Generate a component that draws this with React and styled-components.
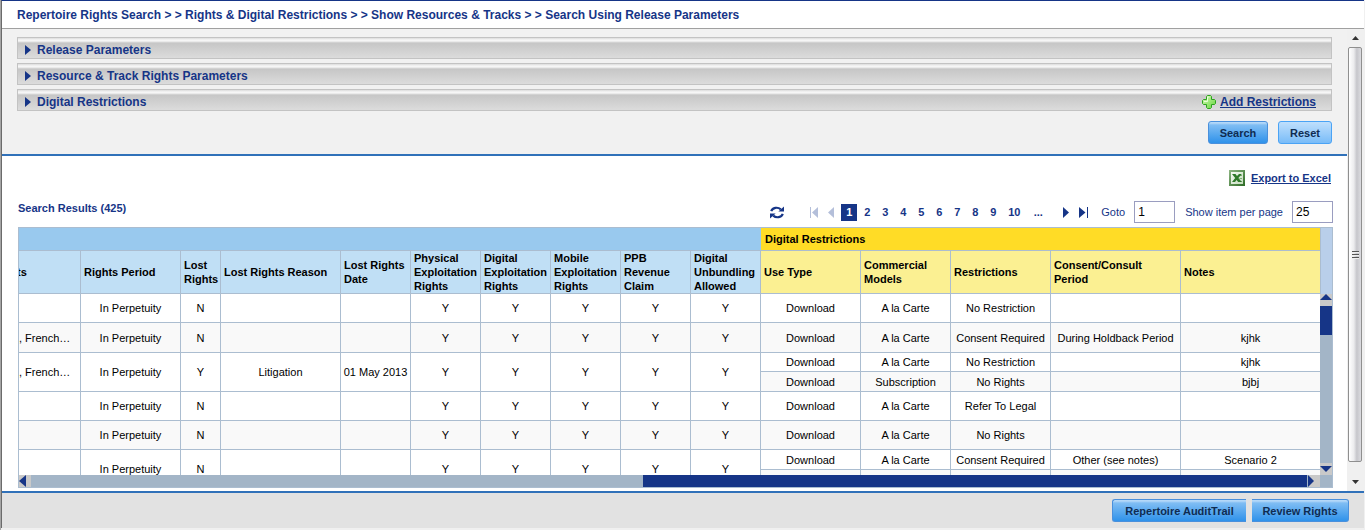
import React from "react";
import styled, { createGlobalStyle, css } from "styled-components";

const navy = "#163587";
const line = "#abbdd0";
const track = "#a3b5c7";
const arrowBox = "#c9c9c9";

const GlobalStyle = createGlobalStyle`
  *, *::before, *::after { box-sizing: border-box; }
  body {
    margin: 0;
    background: #f0f0f0;
    font-family: "Liberation Sans", Arial, sans-serif;
    font-size: 11px;
    line-height: 14px;
    color: #000;
  }
`;

const Frame = styled.div`
  height: 100vh;
  min-height: 400px;
  padding: 0 1px 2px 0;
  border-left: 1px solid #a5a5a5;
`;

const Page = styled.div`
  height: 100%;
  display: flex;
  flex-direction: column;
  background: #fff;
  border-left: 1px solid #6b6b6b;
  border-top: 1px solid ${navy};
`;

const Breadcrumb = styled.h1`
  flex: none;
  margin: 0;
  height: 28px;
  padding: 0 15px;
  border-bottom: 1px solid #a0a0a0;
  font-size: 12px;
  line-height: 28px;
  color: ${navy};
`;

const Body = styled.div`
  flex: 1;
  min-height: 0;
  display: flex;
`;

const Main = styled.main`
  flex: 1;
  min-width: 0;
  display: flex;
  flex-direction: column;
`;

const Criteria = styled.section`
  flex: none;
  display: flex;
  flex-direction: column;
  gap: 4px;
  padding: 8px 15px 10px;
  background: #f1f1f1;
  border-bottom: 2px solid #3071b9;
`;

const Panel = styled.div`
  display: flex;
  align-items: center;
  justify-content: space-between;
  height: 22px;
  padding: 3px 15px 0 7px;
  border: 1px solid #c3c3c3;
  background: linear-gradient(#dcdcdc 0, #f6f6f6 2px, #f6f6f6 3px, #c6c6c6 5px, #dcdcdc 20px);
`;

const PanelToggle = styled.button`
  display: flex;
  align-items: center;
  gap: 6px;
  padding: 0;
  border: 0;
  background: none;
  font: bold 12px/14px "Liberation Sans", Arial, sans-serif;
  color: ${navy};
`;

const IconLink = styled.a`
  display: flex;
  align-items: center;
  gap: ${(p) => p.$gap}px;
  font-size: ${(p) => p.$size}px;
  font-weight: bold;
  color: ${navy};
`;

const Actions = styled.div`
  display: flex;
  justify-content: flex-end;
  gap: 10px;
  padding-top: 6px;
`;

const Button = styled.button`
  height: 23px;
  width: ${(p) => p.$width}px;
  padding: 0;
  border: 1px solid #4a90dc;
  border-radius: 3px;
  background: linear-gradient(#b4d8f8 0, #b4d8f8 1px, #7fbdf3 3px, #2f92ea 100%);
  font: bold 11px/14px "Liberation Sans", Arial, sans-serif;
  color: #0f2c52;
  white-space: nowrap;
  ${(p) =>
    p.$light &&
    css`
      border-color: #4aa3f5;
      background: linear-gradient(#bfdffc, #79bcf8);
    `}
  ${(p) =>
    p.$open === "right" &&
    css`
      border-right: 0;
      border-radius: 3px 0 0 3px;
    `}
  ${(p) =>
    p.$open === "left" &&
    css`
      border-left: 0;
      border-radius: 0 3px 3px 0;
    `}
`;

const Results = styled.section`
  flex: 1;
  min-height: 0;
  display: flex;
  flex-direction: column;
  padding: 14px 14px 3px 16px;
`;

const ExportRow = styled.div`
  flex: none;
  display: flex;
  justify-content: flex-end;
  height: 16px;
  padding-right: 2px;
`;

const Toolbar = styled.div`
  flex: none;
  display: flex;
  justify-content: space-between;
  align-items: flex-start;
  padding: 15px 0 4px;
  color: ${navy};
`;

const ResultTitle = styled.h2`
  margin: 0;
  font-size: 11px;
  line-height: 14px;
`;

const Pager = styled.nav`
  display: flex;
  align-items: center;
  height: 22px;
`;

const PagerButton = styled.button`
  display: flex;
  justify-content: center;
  width: ${(p) => p.$width}px;
  padding: 0;
  border: 0;
  background: none;
  color: ${(p) => (p.disabled ? "#b4bfda" : navy)};
`;

const Gap = styled.span`
  width: ${(p) => p.$width}px;
`;

const PageLink = styled.a`
  width: ${(p) => (p.$wide ? 24 : 18)}px;
  text-align: center;
  font-weight: bold;
  line-height: 17px;
  text-decoration: none;
  color: ${navy};
  &[aria-current] {
    width: 16px;
    margin-right: 1px;
    background: ${navy};
    color: #fff;
  }
`;

const Field = styled.label`
  display: flex;
  align-items: center;
  gap: 9px;
  margin-left: 10px;
`;

const NumberBox = styled.input`
  width: 41px;
  height: 22px;
  padding: 0 3px;
  border: 1px solid #9a9dc0;
  font: 12px/14px "Liberation Sans", Arial, sans-serif;
  color: #000;
`;

const Grid = styled.div`
  flex: 1;
  min-height: 0;
  display: flex;
  flex-direction: column;
  border: 1px solid ${line};
`;

const GridTop = styled.div`
  flex: 1;
  min-height: 0;
  display: flex;
`;

const Viewport = styled.div`
  flex: 1;
  min-width: 0;
  overflow: hidden;
`;

const Table = styled.table`
  width: calc(100% + 2px);
  margin-left: -2px;
  table-layout: fixed;
  border-collapse: separate;
  border-spacing: 0;
`;

const GroupHead = styled.th`
  height: 23px;
  padding: 0 4px;
  border-bottom: 1px solid ${line};
  background: ${(p) => (p.$yellow ? "#ffdc26" : "#99c9ee")};
  text-align: left;
`;

const Head = styled.th`
  height: 43px;
  padding: 0 3px 0 ${(p) => (p.$clipped ? 0 : 3)}px;
  border-right: 1px solid ${line};
  border-bottom: 1px solid ${line};
  background: ${(p) => (p.$yellow ? "#fbf092" : "#c0dff5")};
  text-align: left;
  &:last-child { border-right: 0; }
`;

const Row = styled.tr`
  height: ${(p) => p.$height}px;
`;

const Cell = styled.td`
  padding: 0 0 0 ${(p) => (p.$clipped ? 2 : 0)}px;
  border-right: 1px solid ${line};
  border-bottom: 1px solid ${line};
  background: ${(p) => (p.$shade ? "#f9f9f9" : "#fff")};
  text-align: ${(p) => (p.$clipped ? "left" : "center")};
  white-space: nowrap;
  ${(p) => p.$last && "border-right: 0;"}
`;

const VerticalBar = styled.div`
  flex: none;
  width: 12px;
  display: flex;
  flex-direction: column;
  background: ${track};
`;

const HeadCap = styled.div`
  height: 66px;
  border-left: 1px solid ${line};
  background: #b9cfea;
`;

const ArrowBox = styled.button`
  flex: none;
  display: flex;
  align-items: ${(p) => p.$align || "center"};
  width: 12px;
  height: 12px;
  padding: 0;
  border: 0;
  background: ${arrowBox};
  color: ${navy};
`;

const VerticalThumb = styled.div`
  height: 29px;
  margin-bottom: auto;
  background: ${navy};
`;

const HorizontalBar = styled.div`
  flex: none;
  display: flex;
  height: 12px;
  background: ${track};
`;

const HorizontalTrack = styled.div`
  flex: 1;
  display: flex;
  justify-content: flex-end;
  padding-right: 1px;
`;

const HorizontalThumb = styled.div`
  width: 52%;
  background: ${navy};
`;

const Corner = styled.div`
  width: 12px;
`;

const PageBar = styled.div`
  flex: none;
  display: flex;
  flex-direction: column;
  width: 17px;
  padding: 0 2px 0 1px;
  background: #f0f0f0;
`;

const PageArrow = styled.button`
  flex: none;
  display: flex;
  align-items: center;
  justify-content: center;
  height: 18px;
  padding: 0;
  border: 0;
  background: none;
  color: #333;
`;

const PageThumb = styled.div`
  flex: 1;
  display: flex;
  flex-direction: column;
  align-items: center;
  justify-content: center;
  gap: 1px;
  border: 1px solid #8f8f8f;
  border-radius: 2px;
  background: linear-gradient(90deg, #fff, #ececee 40%, #c6c6cb 65%, #dcdce0);
`;

const GripLine = styled.span`
  width: 7px;
  height: 2px;
  background: #555;
  border-bottom: 1px solid #eee;
`;

const PageArrowEnd = styled(PageArrow)`
  margin-top: 11px;
`;

const Footer = styled.footer`
  flex: none;
  display: flex;
  justify-content: flex-end;
  gap: 6px;
  padding: 6px 15px;
  border-top: 2px solid #3071b9;
  background: #e2e2e2;
`;

function Triangle({ dir, width, height }) {
  const points = {
    right: `0,0 ${width},${height / 2} 0,${height}`,
    left: `${width},0 0,${height / 2} ${width},${height}`,
    up: `0,${height} ${width / 2},0 ${width},${height}`,
    down: `0,0 ${width},0 ${width / 2},${height}`,
  };
  return (
    <svg width={width} height={height} aria-hidden="true">
      <polygon points={points[dir]} fill="currentColor" />
    </svg>
  );
}

function EdgeIcon({ end }) {
  return (
    <svg width="9" height="11" aria-hidden="true" fill="currentColor">
      {end ? (
        <path d="M0 0 L6.500 5.5 L0 11Z M8 0h1v11h-1z" />
      ) : (
        <path d="M0 0h1v11h-1z M8 0v11L2 5.5Z" />
      )}
    </svg>
  );
}

function RefreshIcon() {
  return (
    <svg width="14" height="13" viewBox="0 0 14 13" aria-hidden="true">
      <path d="M1.2 5.2C2.6 1.6 7.6.6 10.8 3.4" fill="none" stroke="currentColor" strokeWidth="2.2" />
      <path d="M14 .4V5.4H8.4Z" fill="currentColor" />
      <path d="M12.8 7.8C11.4 11.4 6.4 12.4 3.2 9.6" fill="none" stroke="currentColor" strokeWidth="2.2" />
      <path d="M0 12.6V7.6H5.6Z" fill="currentColor" />
    </svg>
  );
}

function PlusIcon() {
  return (
    <svg width="14" height="14" viewBox="0 0 14 14" aria-hidden="true">
      <defs>
        <linearGradient id="plus" x1="0" y1="0" x2="1" y2="1">
          <stop offset="0" stopColor="#d6fbb6" />
          <stop offset="1" stopColor="#62d43a" />
        </linearGradient>
      </defs>
      <path
        d="M5.5.5h3l1 1v3h3l1 1v3l-1 1h-3v3l-1 1h-3l-1-1v-3h-3l-1-1v-3l1-1h3v-3z"
        fill="url(#plus)"
        stroke="#2ca31c"
      />
      <path d="M2 6.5h3.500V2h2" fill="none" stroke="#e8ffd6" />
    </svg>
  );
}

function ExcelIcon() {
  return (
    <svg width="16" height="16" viewBox="0 0 16 16" aria-hidden="true">
      <defs>
        <linearGradient id="sheet" x1="0" y1="0" x2="1" y2="1">
          <stop offset="0" stopColor="#8fb684" />
          <stop offset="1" stopColor="#2d6b25" />
        </linearGradient>
        <linearGradient id="paper" x1="0" y1="0" x2="1" y2="1">
          <stop offset="0" stopColor="#f6faf4" />
          <stop offset="1" stopColor="#c4dcbd" />
        </linearGradient>
      </defs>
      <path d="M0 0h16v16H0z" fill="url(#sheet)" />
      <path d="M2 2h12v12H2z" fill="url(#paper)" />
      <path d="M10 5.500h3M10.500 8.500h2.500M10 11.500h3" stroke="#7fae76" />
      <path d="M3 4h3.500l1.500 2L10 4h2.800L9.400 8l3.400 4H9.200L7.600 10 6 12H3l3.200-4z" fill="#2f7a2a" />
    </svg>
  );
}

const columnWidths = [64, 100, 40, 120, 70, 70, 70, 70, 70, 70, 100, 90, 100, 130, null];
const rightsHeads = [
  "ts",
  "Rights Period",
  "Lost Rights",
  "Lost Rights Reason",
  "Lost Rights Date",
  "Physical Exploitation Rights",
  "Digital Exploitation Rights",
  "Mobile Exploitation Rights",
  "PPB Revenue Claim",
  "Digital Unbundling Allowed",
];
const restrictionHeads = ["Use Type", "Commercial Models", "Restrictions", "Consent/Consult Period", "Notes"];

const yes = ["Y", "Y", "Y", "Y", "Y"];
const records = [
  {
    heights: [29],
    rights: ["", "In Perpetuity", "N", "", "", ...yes],
    lines: [["Download", "A la Carte", "No Restriction", "", ""]],
  },
  {
    heights: [30],
    shade: true,
    rights: [", French…", "In Perpetuity", "N", "", "", ...yes],
    lines: [["Download", "A la Carte", "Consent Required", "During Holdback Period", "kjhk"]],
  },
  {
    heights: [19, 20],
    rights: [", French…", "In Perpetuity", "Y", "Litigation", "01 May 2013", ...yes],
    lines: [
      ["Download", "A la Carte", "No Restriction", "", "kjhk"],
      ["Download", "Subscription", "No Rights", "", "bjbj"],
    ],
  },
  {
    heights: [29],
    rights: ["", "In Perpetuity", "N", "", "", ...yes],
    lines: [["Download", "A la Carte", "Refer To Legal", "", ""]],
  },
  {
    heights: [29],
    shade: true,
    rights: ["", "In Perpetuity", "N", "", "", ...yes],
    lines: [["Download", "A la Carte", "No Rights", "", ""]],
  },
  {
    heights: [20, 19],
    rights: ["", "In Perpetuity", "N", "", "", ...yes],
    lines: [
      ["Download", "A la Carte", "Consent Required", "Other (see notes)", "Scenario 2"],
      ["", "", "", "", ""],
    ],
  },
];

function ResultsTable() {
  return (
    <Table>
      <colgroup>
        {columnWidths.map((w, i) => (
          <col key={i} width={w || undefined} />
        ))}
      </colgroup>
      <thead>
        <tr>
          <GroupHead colSpan={10} />
          <GroupHead colSpan={5} $yellow>
            Digital Restrictions
          </GroupHead>
        </tr>
        <tr>
          {rightsHeads.map((h, i) => (
            <Head key={h} $clipped={i === 0}>
              {h}
            </Head>
          ))}
          {restrictionHeads.map((h) => (
            <Head key={h} $yellow>
              {h}
            </Head>
          ))}
        </tr>
      </thead>
      <tbody>
        {records.map((r, n) =>
          r.lines.map((cells, k) => (
            <Row key={`${n}-${k}`} $height={r.heights[k]}>
              {k === 0 &&
                r.rights.map((c, i) => (
                  <Cell key={i} rowSpan={r.lines.length} $shade={r.shade} $clipped={i === 0}>
                    {c}
                  </Cell>
                ))}
              {cells.map((c, i) => (
                <Cell key={`d${i}`} $shade={r.shade || k === 1} $last={i === 4}>
                  {c}
                </Cell>
              ))}
            </Row>
          ))
        )}
      </tbody>
    </Table>
  );
}

function CriteriaPanel({ title, children }) {
  return (
    <Panel>
      <PanelToggle type="button" aria-expanded="false">
        <Triangle dir="right" width={6} height={10} />
        {title}
      </PanelToggle>
      {children}
    </Panel>
  );
}

export default function App() {
  return (
    <Frame>
      <GlobalStyle />
      <Page>
        <Breadcrumb>
          Repertoire Rights Search &gt; &gt; Rights &amp; Digital Restrictions &gt; &gt; Show Resources &amp; Tracks
          &gt; &gt; Search Using Release Parameters
        </Breadcrumb>
        <Body>
          <Main>
            <Criteria>
              <CriteriaPanel title="Release Parameters" />
              <CriteriaPanel title="Resource & Track Rights Parameters" />
              <CriteriaPanel title="Digital Restrictions">
                <IconLink href="#add" $gap={4} $size={12}>
                  <PlusIcon />
                  Add Restrictions
                </IconLink>
              </CriteriaPanel>
              <Actions>
                <Button type="button" $width={60}>
                  Search
                </Button>
                <Button type="button" $width={54} $light>
                  Reset
                </Button>
              </Actions>
            </Criteria>
            <Results>
              <ExportRow>
                <IconLink href="#export" $gap={6} $size={11}>
                  <ExcelIcon />
                  Export to Excel
                </IconLink>
              </ExportRow>
              <Toolbar>
                <ResultTitle>Search Results (425)</ResultTitle>
                <Pager aria-label="Result pages">
                  <PagerButton type="button" aria-label="Refresh" $width={14}>
                    <RefreshIcon />
                  </PagerButton>
                  <Gap $width={26} />
                  <PagerButton type="button" aria-label="First page" $width={9} disabled>
                    <EdgeIcon />
                  </PagerButton>
                  <Gap $width={9} />
                  <PagerButton type="button" aria-label="Previous page" $width={6} disabled>
                    <Triangle dir="left" width={6} height={11} />
                  </PagerButton>
                  <Gap $width={7} />
                  <PageLink href="#p1" aria-current="page">
                    1
                  </PageLink>
                  {[2, 3, 4, 5, 6, 7, 8, 9].map((n) => (
                    <PageLink key={n} href={`#p${n}`}>
                      {n}
                    </PageLink>
                  ))}
                  <PageLink href="#p10" $wide>
                    10
                  </PageLink>
                  <PageLink href="#p11" $wide>
                    ...
                  </PageLink>
                  <Gap $width={13} />
                  <PagerButton type="button" aria-label="Next page" $width={6}>
                    <Triangle dir="right" width={6} height={11} />
                  </PagerButton>
                  <Gap $width={10} />
                  <PagerButton type="button" aria-label="Last page" $width={9}>
                    <EdgeIcon end />
                  </PagerButton>
                  <Gap $width={3} />
                  <Field>
                    Goto
                    <NumberBox type="text" defaultValue="1" />
                  </Field>
                  <Field>
                    Show item per page
                    <NumberBox type="text" defaultValue="25" />
                  </Field>
                </Pager>
              </Toolbar>
              <Grid>
                <GridTop>
                  <Viewport>
                    <ResultsTable />
                  </Viewport>
                  <VerticalBar>
                    <HeadCap />
                    <ArrowBox type="button" aria-label="Scroll up" $align="flex-start">
                      <Triangle dir="up" width={12} height={6} />
                    </ArrowBox>
                    <VerticalThumb />
                    <ArrowBox type="button" aria-label="Scroll down">
                      <Triangle dir="down" width={12} height={6} />
                    </ArrowBox>
                  </VerticalBar>
                </GridTop>
                <HorizontalBar>
                  <ArrowBox type="button" aria-label="Scroll left">
                    <Triangle dir="left" width={7} height={12} />
                  </ArrowBox>
                  <HorizontalTrack>
                    <HorizontalThumb />
                  </HorizontalTrack>
                  <ArrowBox type="button" aria-label="Scroll right">
                    <Triangle dir="right" width={6} height={12} />
                  </ArrowBox>
                  <Corner />
                </HorizontalBar>
              </Grid>
            </Results>
          </Main>
          <PageBar>
            <PageArrow type="button" aria-label="Scroll page up">
              <Triangle dir="up" width={7} height={4} />
            </PageArrow>
            <PageThumb>
              <GripLine />
              <GripLine />
              <GripLine />
            </PageThumb>
            <PageArrowEnd type="button" aria-label="Scroll page down">
              <Triangle dir="down" width={7} height={4} />
            </PageArrowEnd>
          </PageBar>
        </Body>
        <Footer>
          <Button type="button" $width={134} $open="right">
            Repertoire AuditTrail
          </Button>
          <Button type="button" $width={97} $open="left">
            Review Rights
          </Button>
        </Footer>
      </Page>
    </Frame>
  );
}
